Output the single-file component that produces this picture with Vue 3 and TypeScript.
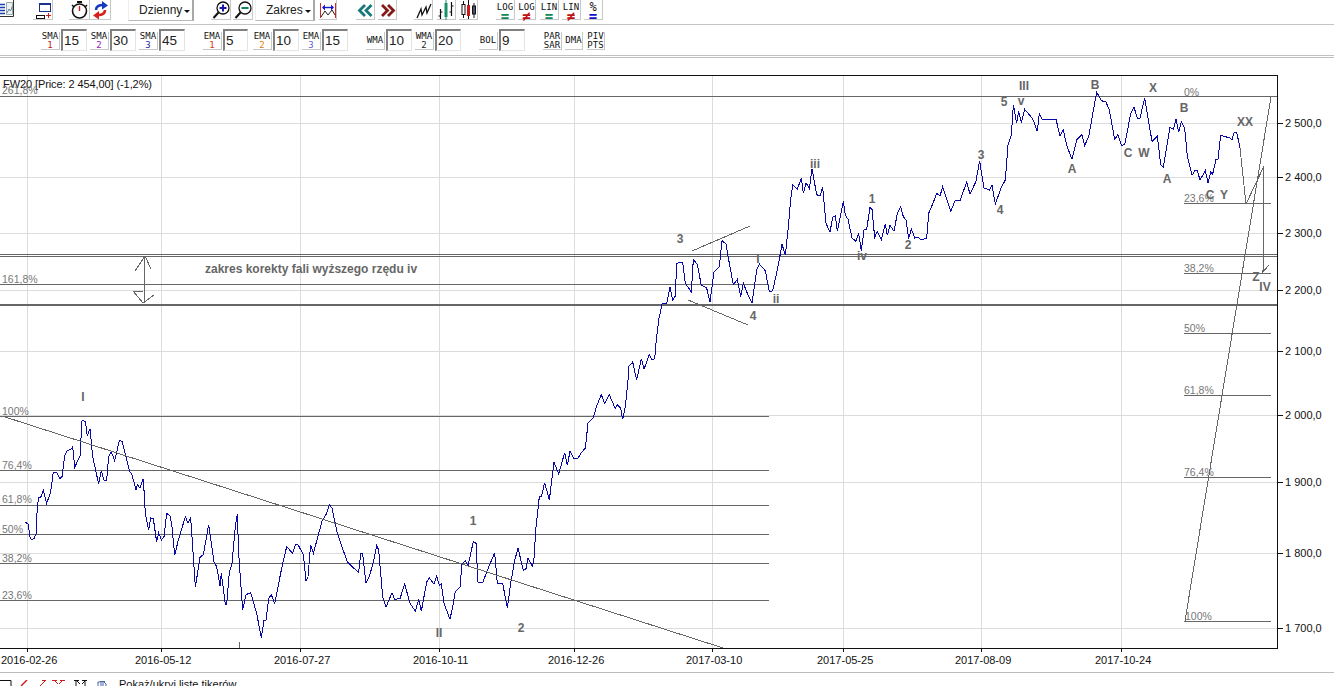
<script setup lang="ts">
type P = [number, number]
const seg = (ox: number, oy: number, s: string): P[] =>
  s.trim().split(/\s+/).map((t) => {
    const [a, b] = t.split(',').map(Number)
    return [ox + a / 3, oy + b / 3] as P
  })
const price = [
  ...seg(0, 380, '76,427 84,432 90,470 94,478 102,476 108,462 112,380 116,352 122,352 130,332 140,370 152,336 160,276 170,276 180,296 186,290 194,228 202,212 216,206 218,198 224,262 240,228 246,122 256,124 262,168 270,146 278,230 296,312 304,272 312,300 320,300 326,230 334,216 344,242 358,182 366,184 378,230 388,272 396,284 408,330 412,314 420,324 430,296 436,400 446,450 452,414 460,416 470,486 476,458 484,480 492,470 500,400 510,408 516,440 524,526 534,484 556,410 564,430 572,412 578,500 586,622 600,532 610,524 626,434 642,546 650,560 660,618 664,580 676,672 680,672 688,578 696,550 706,440 712,402 716,520 728,690 738,644 752,638 770,700 784,774 792,720 798,720 806,656 814,644 824,670 846,560 860,500 878,520 886,494 894,494 910,524 918,604 924,590 932,494 940,520 966,424 980,400 988,374 996,384 1012,460 1042,546 1076,578 1082,520 1088,522 1098,610 1108,590 1120,546 1130,496 1136,510 1148,650 1158,682 1176,638 1184,658 1200,656'),
  ...seg(400, 380, '14,612 30,670 46,694 56,658 64,694 80,606 88,594 102,612 110,588 118,616 124,612 132,670 150,718 158,680 166,634 180,622 186,552 196,542 204,558 220,484 228,490 234,606 248,608 264,566 284,518 292,610 308,610 322,684 332,610 344,542 354,504 370,572 378,566 384,534 398,560 402,534 408,440 418,350 424,350 434,308 448,360 462,246 476,282 494,218 502,256 510,214 520,234 534,234 544,218 556,204 564,130 580,112 590,78 604,44 614,70 628,44 646,86 652,74 662,84 668,118 676,80 684,0'),
  ...seg(600, 270, '86,290 98,276 110,330 124,266 132,298 148,254 156,270 164,266 168,220 176,150 186,102 200,100 210,50 218,90 226,78'),
  ...seg(640, 150, '110,340 128,336 136,400 154,426 160,328 172,344 184,406 200,414 210,456 222,366 238,350 246,272 258,282 268,340 280,404 292,388 302,440 310,400 322,430 336,460 350,360 358,342 376,362 388,426 398,422 408,378 416,340 426,282 436,316 444,240 452,150 458,104 472,118 484,84 490,130 498,98 508,116 516,56 530,134 540,138 548,112 558,220 570,246 578,202 586,198 592,244 610,154 616,196 624,208 636,264 648,274 656,250 664,302 672,240 680,238 690,172 696,178 704,262 712,244 724,268 736,222 742,256 750,226 762,244 772,190 782,170 790,200 798,210 806,266 814,236 824,264 834,262 842,268 860,266 866,190 878,162 890,130 900,138 908,110 932,184 946,150 960,152 980,96 990,132 1008,94 1018,36'),
  ...seg(980, 70, '0,280 12,354 28,360 36,346 46,402 64,352 76,330 84,226 94,196 100,104 110,160 116,124 124,158 134,118 158,146 172,184 178,130 186,148 228,148 240,198 250,180 260,226 276,268 290,210 306,194 314,226 326,200 350,66 364,92 378,96 388,120 404,208 414,194 424,226 434,224 452,132 462,112 472,144 480,144 494,84 516,214 532,198 542,284 550,292 570,172 580,178 588,146 596,186 604,156 614,174 622,258 636,316 646,300 652,302 660,330 676,302 684,338 692,306 698,312 708,268 714,268 722,196 750,204 756,210 762,188 770,186 780,234'),
]
const pricePoints = price.map((p) => p.join(',')).join(' ')

const gridY = [123, 177, 233, 290, 351, 415, 482, 553, 628]
const axis = ['2 500,0', '2 400,0', '2 300,0', '2 200,0', '2 100,0', '2 000,0', '1 900,0', '1 800,0', '1 700,0']
const dates: [number, string][] = [
  [27, '2016-02-26'], [161, '2016-05-12'], [300, '2016-07-27'], [439, '2016-10-11'], [574, '2016-12-26'],
  [712, '2017-03-10'], [843, '2017-05-25'], [981, '2017-08-09'], [1121, '2017-10-24'],
]
const fibLeft = [416, 470, 505, 534, 563, 600, 284]
const fibRight = [203, 273, 333, 395, 477, 621]
const pct: [number, number, string][] = [
  [2, 95, '261,8%'], [2, 284, '161,8%'], [2, 416, '100%'], [2, 470, '76,4%'], [2, 504, '61,8%'], [2, 534, '50%'], [2, 563, '38,2%'], [2, 600, '23,6%'],
  [1184, 97, '0%'], [1184, 203, '23,6%'], [1184, 273, '38,2%'], [1184, 333, '50%'], [1184, 395, '61,8%'], [1184, 477, '76,4%'], [1185, 621, '100%'],
]
const waves: [number, number, string][] = [
  [83, 397, 'I'], [439, 633, 'II'], [473, 521, '1'], [521, 628, '2'], [680, 239, '3'], [753, 316, '4'], [758, 259, 'I'], [776, 299, 'ii'],
  [815, 164, 'iii'], [862, 256, 'iv'], [872, 199, '1'], [908, 245, '2'], [981, 155, '3'], [1000, 210, '4'], [1004, 102, '5'], [1021, 101, 'v'],
  [1024, 86, 'III'], [1072, 169, 'A'], [1095, 85, 'B'], [1128, 153, 'C'], [1144, 153, 'W'], [1153, 88, 'X'], [1167, 179, 'A'], [1184, 108, 'B'],
  [1210, 195, 'C'], [1224, 195, 'Y'], [1245, 122, 'XX'], [1256, 277, 'Z'], [1265, 287, 'IV'],
]
const ind = [
  { a: 'SMA', b: '1', c: '#c01818', v: '15', m: 'ml41' },
  { a: 'SMA', b: '2', c: '#9018b8', v: '30', m: 'ml3' },
  { a: 'SMA', b: '3', c: '#2828a8', v: '45', m: 'ml3' },
  { a: 'EMA', b: '1', c: '#d83810', v: '5', m: 'ml18 narrow' },
  { a: 'EMA', b: '2', c: '#e08010', v: '10', m: 'ml5' },
  { a: 'EMA', b: '3', c: '#6060c8', v: '15', m: 'ml3' },
  { a: 'WMA', b: '', c: '', v: '10', m: 'ml18' },
  { a: 'WMA', b: '2', c: '#222', v: '20', m: 'ml3' },
  { a: 'BOL', b: '', c: '', v: '9', m: 'ml18' },
]
const scales = [
  { t: 'LOG', s: '=', c: '#108858', m: 'ml18', w: 'w19' },
  { t: 'LOG', s: '≠', c: '#c01010', m: 'ml3', w: 'w18' },
  { t: 'LIN', s: '=', c: '#108858', m: 'ml4', w: 'w19' },
  { t: 'LIN', s: '≠', c: '#c01010', m: 'ml3', w: 'w19' },
  { t: '%', s: '=', c: '#1010c8', m: 'ml3', w: 'w19 pc' },
]
</script>

<template>
  <div class="app">
    <div class="row1">
      <span class="tb list w14">
        <svg width="14" height="17" viewBox="0 0 14 17">
          <path d="M0 4.500h5M0 7.500h5M0 10.500h5M0 13.500h5" stroke="#1840b0" stroke-width="1.400" />
          <path d="M6.500 14.500V2.500h6v12z" fill="#eef2f4" stroke="#9aa" />
          <path d="M7 13l2-4 1.500 2 2-5" fill="none" stroke="#689" />
          <path d="M13.500 0v16.500H0" fill="none" stroke="#333" />
        </svg>
      </span>
      <span class="tb w20 ml19">
        <svg width="20" height="20" viewBox="0 0 20 20">
          <rect x="6.500" y="3.500" width="11" height="8" fill="#fff" stroke="#1a2f90" />
          <path d="M6 4.500h12" stroke="#1a2f90" />
          <rect x="3.500" y="15.500" width="8" height="3" fill="#fff" stroke="#111" />
          <path d="M13 15.500h5M15.500 13v5" stroke="#d81818" />
        </svg>
      </span>
      <span class="tb w21 ml16">
        <svg width="21" height="20" viewBox="0 0 21 20">
          <circle cx="10.500" cy="11" r="7" fill="#fff" stroke="#111" stroke-width="1.600" />
          <path d="M8 2h5" stroke="#111" stroke-width="2" />
          <path d="M3 5l2 2M18 5l-2 2" stroke="#111" stroke-width="1.500" />
          <path d="M10.500 6v5" stroke="#d81818" stroke-width="1.400" />
        </svg>
      </span>
      <span class="tb w21">
        <svg width="21" height="20" viewBox="0 0 21 20">
          <path d="M6 10C6 6 9 5 13 5" fill="none" stroke="#1838c0" stroke-width="2.600" />
          <path d="M12 1l6 4.500-6 4z" fill="#1838c0" />
          <path d="M15 10c0 4-3 5-7 5" fill="none" stroke="#d82020" stroke-width="2.600" />
          <path d="M9 11l-6 4.500 6 4z" fill="#d82020" />
        </svg>
      </span>
      <span class="drop ml17 w66">Dzienny<i class="caret"></i></span>
      <span class="tb w20 ml17">
        <svg width="20" height="20" viewBox="0 0 20 20">
          <circle cx="12" cy="8" r="6" fill="#fff" stroke="#111" stroke-width="1.300" />
          <path d="M8.500 8h7M12 4.500v7" stroke="#1818b0" stroke-width="2" />
          <path d="M7.500 12.500L2.500 18" stroke="#111" stroke-width="2" />
        </svg>
      </span>
      <span class="tb w20 ml2">
        <svg width="20" height="20" viewBox="0 0 20 20">
          <circle cx="12" cy="8" r="6" fill="#fff" stroke="#111" stroke-width="1.300" />
          <path d="M8.500 8h7" stroke="#108858" stroke-width="2" />
          <path d="M7.500 12.500L2.500 18" stroke="#111" stroke-width="2" />
        </svg>
      </span>
      <span class="drop ml2 w60 zak">Zakres<i class="caret"></i></span>
      <span class="tb w18 ml4">
        <svg width="18" height="20" viewBox="0 0 18 20">
          <path d="M1.500 3v15M16.500 3v15" stroke="#d02828" />
          <path d="M4 7.500h10" stroke="#1818c8" stroke-width="1.400" />
          <path d="M6 4.500L3 7.500l3 3zM12 4.500l3 3-3 3z" fill="#1818c8" />
          <path d="M2 17l4-6 3 4 4-5 3 5" fill="none" stroke="#222" />
        </svg>
      </span>
      <span class="tb w19 ml19">
        <svg width="19" height="20" viewBox="0 0 19 20">
          <path d="M9 5L3.500 10.500 9 16M15.500 5L10 10.500l5.500 5.500" fill="none" stroke="#16787a" stroke-width="2.800" />
        </svg>
      </span>
      <span class="tb w19 ml3">
        <svg width="19" height="20" viewBox="0 0 19 20">
          <path d="M4 5l5.500 5.500L4 16M10 5l5.500 5.500L10 16" fill="none" stroke="#861818" stroke-width="2.800" />
        </svg>
      </span>
      <span class="tb w19 ml17">
        <svg width="19" height="20" viewBox="0 0 19 20">
          <path d="M3 18L7 9l1 6 4-8 1 6 4-9" fill="none" stroke="#111" stroke-width="1.300" />
        </svg>
      </span>
      <span class="tb w19 ml4">
        <svg width="19" height="20" viewBox="0 0 19 20">
          <path d="M3.500 9v10M1.500 16h2M3.500 12h2M14.500 2v14M12.500 12h2M14.500 6h2" stroke="#111" stroke-width="1.200" />
          <rect x="7.500" y="3" width="3" height="14" fill="#18906a" />
          <path d="M9 0v20" stroke="#18906a" />
        </svg>
      </span>
      <span class="tb w19 ml3">
        <svg width="19" height="20" viewBox="0 0 19 20">
          <path d="M4.500 1v17M15 3v15" stroke="#111" />
          <rect x="3" y="4.500" width="3" height="10" fill="#fff" stroke="#111" />
          <path d="M9.500 0v19" stroke="#111" />
          <rect x="8" y="5" width="3" height="11" fill="#d01818" />
          <rect x="13.500" y="6" width="3" height="8" fill="#456" stroke="#111" />
        </svg>
      </span>
      <span v-for="(s, i) in scales" :key="i" class="tb sc" :class="[s.m, s.w]">
        <span class="sct">{{ s.t }}</span>
        <span class="scs" :style="{ color: s.c }">{{ s.s }}</span>
      </span>
    </div>

    <div class="row2">
      <div v-for="(p, i) in ind" :key="i" class="pair" :class="p.m">
        <span class="ib">
          <span>{{ p.a }}</span>
          <span v-if="p.b" :style="{ color: p.c }">{{ p.b }}</span>
        </span>
        <span class="inp">{{ p.v }}</span>
      </div>
      <span class="ib ml18"><span>PAR</span><span>SAR</span></span>
      <span class="ib ml3 w18"><span>DMA</span></span>
      <span class="ib ml4 w18"><span>PIV</span><span>PTS</span></span>
    </div>

    <svg class="chart" width="1334" height="614" viewBox="0 58 1334 614">
      <g shape-rendering="crispEdges">
        <path v-for="y in gridY" :key="'g' + y" :d="`M0 ${y + 0.5}H1278`" stroke="#dcdcdc" />
        <path v-for="d in dates" :key="'v' + d[0]" :d="`M${d[0] + 0.5} 75V648`" stroke="#dcdcdc" />
        <path v-for="y in fibLeft" :key="'l' + y" :d="`M0 ${y + 0.5}H769`" stroke="#666" />
        <path v-for="y in fibRight" :key="'r' + y" :d="`M1184 ${y + 0.5}H1271`" stroke="#666" />
        <path d="M0 96.500H1278M0 254.500H1278M0 256.500H1278" stroke="#666" />
        <path d="M0 305H1278" stroke="#666" stroke-width="2" />
        <polyline :points="pricePoints" fill="none" stroke="#0808a8" />
        <path d="M2 416L723 648M1185 621L1271 97M1240 148L1246 204L1264 166L1263 272L1269 265" fill="none" stroke="#666" />
        <path d="M692 251L750 226M688 300L748 325" fill="none" stroke="#666" />
        <path d="M144 256V303M145 256L135 271M145 256L151 269M143 303L133 291H143M143 303L154 295" fill="none" stroke="#666" />
        <path d="M239.500 642V648" stroke="#666" />
        <path d="M0 75.500H1278M1277.500 75V649M0 648.500H1278" stroke="#111" />
        <path v-for="y in gridY" :key="'t' + y" :d="`M1278 ${y + 0.5}H1283`" stroke="#111" />
        <path v-for="d in dates" :key="'b' + d[0]" :d="`M${d[0] + 0.5} 649V652`" stroke="#111" />
      </g>
      <text x="3" y="88" class="title" textLength="149" lengthAdjust="spacing">FW20 [Price: 2 454,00] (-1,2%)</text>
      <text v-for="p in pct" :key="p[2] + p[1]" :x="p[0]" :y="p[1] - 1" class="pct">{{ p[2] }}</text>
      <text v-for="(w, i) in waves" :key="'w' + i" :x="w[0]" :y="w[1] + 4" class="wave">{{ w[2] }}</text>
      <text x="205" y="273" class="note">zakres korekty fali wyższego rzędu iv</text>
      <text v-for="(a, i) in axis" :key="a" x="1285" :y="gridY[i] + 4" class="ax">{{ a }}</text>
      <text v-for="d in dates" :key="d[1]" :x="d[0] - 26" y="664" class="ax">{{ d[1] }}</text>
    </svg>

    <div class="bottom">
      <svg width="115" height="6" viewBox="0 0 115 6">
        <path d="M0 0.500H11V6" fill="none" stroke="#111" />
        <path d="M27 0L21 6" stroke="#d01818" stroke-width="1.400" />
        <path d="M46 0L40 6M42 0.500h4" stroke="#d01818" fill="none" />
        <path d="M52 0.500h5M60 0.500h5M55 1l3 3M62 1l-3 3" stroke="#d01818" fill="none" />
        <path d="M74 0.500h5M82 0.500h5M77 1l3 3M85 1l-3 3M76 1v5M85 1v5" stroke="#111" fill="none" />
        <path d="M98 6V2h6l2 2v2M100 1.500h5M101 3v3M103 3v3" stroke="#4460a8" fill="none" />
      </svg>
      <span class="hint">Pokaż/ukryj listę tikerów</span>
    </div>
  </div>
</template>

<style>
html, body { margin: 0; background: #fff; overflow: hidden; }
</style>

<style scoped>
.app {
  width: 1334px;
  height: 686px;
  overflow: hidden;
  display: flex;
  flex-direction: column;
  background: #fff;
  font-family: "Liberation Sans", Arial, sans-serif;
}
.row1 {
  height: 25px;
  box-sizing: border-box;
  border-bottom: 1px solid #c4c4c4;
  display: flex;
  align-items: flex-start;
  flex: none;
}
.row2 {
  height: 33px;
  box-sizing: border-box;
  border-bottom: 3px double #c0c0c0;
  padding-top: 4px;
  display: flex;
  align-items: flex-start;
  flex: none;
}
.tb {
  height: 20px;
  box-sizing: border-box;
  border-right: 1px solid #c8c8c8;
  border-bottom: 1px solid #c8c8c8;
  flex: none;
  display: block;
}
.tb svg { display: block; }
.list { height: 17px; border: 0; }
.w14 { width: 14px; }
.w18 { width: 18px; }
.w19 { width: 19px; }
.w20 { width: 20px; }
.w21 { width: 21px; }
.w60 { width: 60px; }
.w66 { width: 66px; }
.ml2 { margin-left: 2px; }
.ml3 { margin-left: 3px; }
.ml4 { margin-left: 4px; }
.ml5 { margin-left: 5px; }
.ml16 { margin-left: 16px; }
.ml17 { margin-left: 17px; }
.ml18 { margin-left: 18px; }
.ml19 { margin-left: 19px; }
.ml41 { margin-left: 41px; }
.drop {
  height: 21px;
  box-sizing: border-box;
  border-right: 2px solid #a8a8a8;
  border-bottom: 1px solid #b8b8b8;
  border-left: 1px solid #eee;
  font-size: 12px;
  line-height: 21px;
  color: #222;
  padding-left: 10px;
  position: relative;
  flex: none;
}
.zak { width: 60px; }
.caret {
  position: absolute;
  right: 2px;
  top: 10px;
  border-left: 3px solid transparent;
  border-right: 3px solid transparent;
  border-top: 3px solid #111;
}
.sc {
  font-family: "DejaVu Sans Mono", monospace;
  font-size: 9px;
  display: flex;
  flex-direction: column;
  align-items: center;
  color: #111;
  padding-top: 3px;
}
.sct { line-height: 9px; height: 9px; }
.scs { font-size: 14px; line-height: 8px; font-weight: bold; }
.pc .sct { font-size: 12px; }
.pair { display: flex; gap: 1px; align-items: flex-start; flex: none; }
.ib {
  width: 19px;
  height: 18px;
  margin-top: 3px;
  box-sizing: border-box;
  border-right: 1px solid #c8c8c8;
  border-bottom: 1px solid #c8c8c8;
  display: flex;
  flex-direction: column;
  align-items: center;
  justify-content: center;
  font-family: "DejaVu Sans Mono", monospace;
  font-size: 9px;
  line-height: 9px;
  color: #111;
  flex: none;
}
.ib.w18 { width: 18px; }
.inp {
  width: 26px;
  height: 22px;
  box-sizing: border-box;
  border-top: 2px solid #808080;
  border-left: 2px solid #808080;
  border-right: 1px solid #e4e4e4;
  border-bottom: 1px solid #e4e4e4;
  font-size: 13.500px;
  line-height: 20px;
  padding-left: 1px;
  color: #222;
  flex: none;
}
.narrow .inp { width: 25px; }
.chart { display: block; flex: none; }
.title { font-size: 11px; fill: #111; }
.pct { font-size: 10.500px; fill: #777; }
.wave { font-size: 12px; font-weight: bold; fill: #666; text-anchor: middle; }
.note { font-size: 12px; font-weight: bold; fill: #666; }
.ax { font-size: 11px; fill: #111; }
.bottom {
  height: 14px;
  flex: none;
  box-sizing: border-box;
  border-top: 1px solid #bbb;
  padding-top: 7px;
  display: flex;
  align-items: flex-start;
  position: relative;
}
.bottom svg { display: block; flex: none; }
.hint {
  margin-left: 4px;
  margin-top: -2px;
  font-size: 11px;
  line-height: 13px;
  color: #111;
  white-space: nowrap;
}
</style>
